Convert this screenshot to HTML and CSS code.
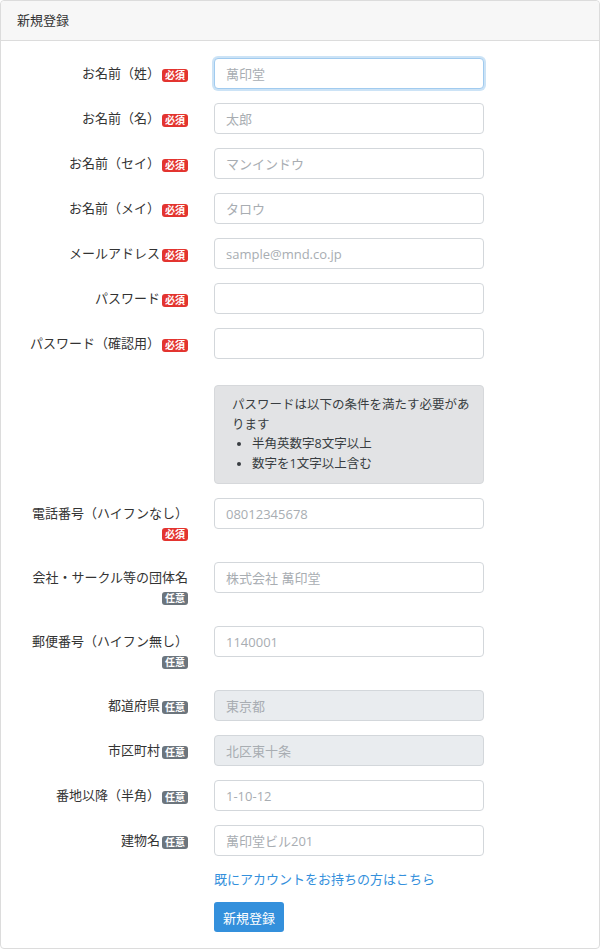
FILE: index.html
```html
<!DOCTYPE html>
<html lang="ja">
<head>
    <meta charset="UTF-8">
    <meta name="viewport" content="width=device-width, initial-scale=1.0">
    <title>新規登録</title>
    <link rel="stylesheet" href="styles.css">
</head>
<body>
    <div class="card">
        <div class="card-header">新規登録</div>
        <form class="card-body">
            <div class="form-row">
                <label class="form-label">お名前（姓）<span class="badge badge-required">必須</span></label>
                <input class="form-input is-focused" type="text" placeholder="萬印堂">
            </div>
            <div class="form-row">
                <label class="form-label">お名前（名）<span class="badge badge-required">必須</span></label>
                <input class="form-input" type="text" placeholder="太郎">
            </div>
            <div class="form-row">
                <label class="form-label">お名前（セイ）<span class="badge badge-required">必須</span></label>
                <input class="form-input" type="text" placeholder="マンインドウ">
            </div>
            <div class="form-row">
                <label class="form-label">お名前（メイ）<span class="badge badge-required">必須</span></label>
                <input class="form-input" type="text" placeholder="タロウ">
            </div>
            <div class="form-row">
                <label class="form-label">メールアドレス<span class="badge badge-required">必須</span></label>
                <input class="form-input" type="email" placeholder="sample@mnd.co.jp">
            </div>
            <div class="form-row">
                <label class="form-label">パスワード<span class="badge badge-required">必須</span></label>
                <input class="form-input" type="password">
            </div>
            <div class="form-row">
                <label class="form-label">パスワード（確認用）<span class="badge badge-required">必須</span></label>
                <input class="form-input" type="password">
            </div>

            <div class="form-row notice-row">
                <div></div>
                <div class="notice">
                    <p>パスワードは以下の条件を満たす必要があります</p>
                    <ul>
                        <li>半角英数字8文字以上</li>
                        <li>数字を1文字以上含む</li>
                    </ul>
                </div>
            </div>

            <div class="form-row">
                <label class="form-label">電話番号（ハイフンなし）<span class="badge badge-required">必須</span></label>
                <input class="form-input" type="text" placeholder="08012345678">
            </div>
            <div class="form-row">
                <label class="form-label">会社・サークル等の団体名<span class="badge badge-optional">任意</span></label>
                <input class="form-input" type="text" placeholder="株式会社 萬印堂">
            </div>
            <div class="form-row">
                <label class="form-label">郵便番号（ハイフン無し）<span class="badge badge-optional">任意</span></label>
                <input class="form-input" type="text" placeholder="1140001">
            </div>
            <div class="form-row">
                <label class="form-label">都道府県<span class="badge badge-optional">任意</span></label>
                <input class="form-input" type="text" placeholder="東京都" disabled>
            </div>
            <div class="form-row">
                <label class="form-label">市区町村<span class="badge badge-optional">任意</span></label>
                <input class="form-input" type="text" placeholder="北区東十条" disabled>
            </div>
            <div class="form-row">
                <label class="form-label">番地以降（半角）<span class="badge badge-optional">任意</span></label>
                <input class="form-input" type="text" placeholder="1-10-12">
            </div>
            <div class="form-row">
                <label class="form-label">建物名<span class="badge badge-optional">任意</span></label>
                <input class="form-input" type="text" placeholder="萬印堂ビル201">
            </div>

            <div class="form-row">
                <div></div>
                <a class="login-link" href="#">既にアカウントをお持ちの方はこちら</a>
            </div>
            <div class="form-row">
                <div></div>
                <div><button class="btn-primary" type="submit">新規登録</button></div>
            </div>
        </form>
    </div>
</body>
</html>
```

FILE: styles.css
```css
/* Page base */
body {
    margin: 0;
    font-family: "Open Sans", "Noto Sans CJK JP", sans-serif;
    font-size: 13px;
    color: #333;
    background-color: #fff;
}

/* Card */
.card {
    width: 600px;
    height: 949px;
    box-sizing: border-box;
    border: 1px solid #dcdcdc;
    border-radius: 4px;
    background-color: #fff;
}

.card-header {
    height: 39px;
    line-height: 39px;
    padding-left: 16px;
    background-color: #f7f7f7;
    border-bottom: 1px solid #dcdcdc;
    border-radius: 4px 4px 0 0;
}

.card-body {
    padding: 17px 0 0 16px;
}

/* Rows: label column + field column */
.form-row {
    display: grid;
    grid-template-columns: 171px 270px;
    column-gap: 26px;
    margin-bottom: 14px;
}

.form-label {
    text-align: right;
    padding: 6px 0;
    line-height: 19px;
}

.badge {
    display: inline-block;
    width: 26px;
    height: 13px;
    margin-left: 2px;
    border-radius: 3px;
    color: #fff;
    font-size: 10px;
    font-weight: bold;
    line-height: 13px;
    text-align: center;
    vertical-align: -1px;
}

.badge-required {
    background-color: #e3342f;
}

.badge-optional {
    background-color: #6c757d;
}

/* Inputs */
.form-input {
    width: 270px;
    height: 31px;
    box-sizing: border-box;
    padding: 0 11px;
    border: 1px solid #d3d7db;
    border-radius: 4px;
    font-family: inherit;
    font-size: 13px;
    color: #495057;
    background-color: #fff;
}

.form-input::placeholder {
    color: #a8adb2;
}

.form-input.is-focused {
    border-color: #a1cbef;
    box-shadow: 0 0 0 2px rgba(52, 144, 220, 0.25);
    outline: none;
}

.form-input:disabled {
    background-color: #e9ecef;
}

/* Password notice */
.notice-row {
    margin-top: 26px;
}

.notice {
    box-sizing: border-box;
    height: 99px;
    padding: 9px 11px 0 17px;
    background-color: #e2e3e5;
    border: 1px solid #d6d8db;
    border-radius: 4px;
    color: #383d41;
    font-size: 12.5px;
    line-height: 19.5px;
}

.notice p {
    margin: 0;
}

.notice ul {
    margin: 0;
    padding-left: 20px;
}

/* Link and button */
.login-link {
    color: #3490dc;
    text-decoration: none;
    line-height: 18px;
}

.btn-primary {
    width: 70px;
    height: 30px;
    border: none;
    border-radius: 3px;
    background-color: #3490dc;
    color: #fff;
    font-family: inherit;
    font-size: 13px;
    cursor: pointer;
}
```
